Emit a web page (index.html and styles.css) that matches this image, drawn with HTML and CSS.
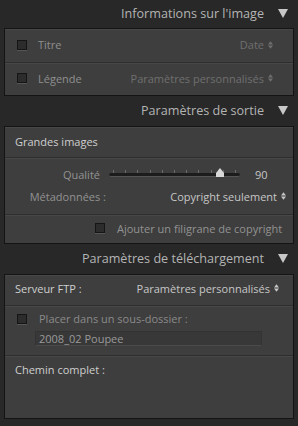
FILE: index.html
```html
<!DOCTYPE html>
<html lang="fr">
<head>
  <meta charset="UTF-8">
  <title>Panneaux d'exportation</title>
  <link rel="stylesheet" href="styles.css">
</head>
<body>
  <div class="panels">
    <div class="panel-header first">
      <span>Informations sur l'image</span>
      <span class="tri"></span>
    </div>
    <div class="box">
      <div class="row row-info">
        <span class="check"></span>
        <span class="label">Titre</span>
        <span class="select dim">Date <svg class="arrows" viewBox="0 0 6 9"><path d="M0 4L3 0L6 4Z M0 5L3 9L6 5Z"/></svg></span>
      </div>
      <div class="row row-info">
        <span class="check"></span>
        <span class="label">Légende</span>
        <span class="select dim">Paramètres personnalisés <svg class="arrows" viewBox="0 0 6 9"><path d="M0 4L3 0L6 4Z M0 5L3 9L6 5Z"/></svg></span>
      </div>
    </div>

    <div class="panel-header">
      <span>Paramètres de sortie</span>
      <span class="tri"></span>
    </div>
    <div class="box">
      <div class="row row-title">Grandes images</div>
      <div class="row row-output">
        <div class="line">
          <span class="field-label">Qualité</span>
          <div class="slider">
            <div class="ticks"></div>
            <div class="track"></div>
            <div class="thumb"></div>
          </div>
          <span class="value">90</span>
        </div>
        <div class="line">
          <span class="field-label">Métadonnées :</span>
          <span class="select bright">Copyright seulement <svg class="arrows" viewBox="0 0 6 9"><path d="M0 4L3 0L6 4Z M0 5L3 9L6 5Z"/></svg></span>
        </div>
      </div>
      <div class="row row-watermark">
        <span class="check"></span>
        <span class="label">Ajouter un filigrane de copyright</span>
      </div>
    </div>

    <div class="panel-header">
      <span>Paramètres de téléchargement</span>
      <span class="tri"></span>
    </div>
    <div class="box last">
      <div class="row row-title ftp">
        <span>Serveur FTP :</span>
        <span class="select bright">Paramètres personnalisés <svg class="arrows" viewBox="0 0 6 9"><path d="M0 4L3 0L6 4Z M0 5L3 9L6 5Z"/></svg></span>
      </div>
      <div class="row row-folder">
        <div class="line-check">
          <span class="check"></span>
          <span class="label">Placer dans un sous-dossier :</span>
        </div>
        <div class="text-field">2008_02 Poupee</div>
      </div>
      <div class="row row-path">Chemin complet :</div>
    </div>
  </div>
</body>
</html>
```

FILE: styles.css
```css
body {
  margin: 0;
  background-color: #282828;
  font-family: "Open Sans", "Noto Sans", Arial, sans-serif;
  color: #9a9a9a;
  width: 298px;
  height: 426px;
  overflow: hidden;
}

.panels {
  display: flex;
  flex-direction: column;
}

.panel-header {
  height: 30px;
  display: flex;
  align-items: center;
  justify-content: flex-end;
  gap: 14px;
  padding-right: 10px;
  padding-bottom: 2px;
  box-sizing: border-box;
  font-size: 12.6px;
  color: #b4b4b4;
}

.panel-header.first {
  height: 28px;
}

.tri {
  width: 0;
  height: 0;
  border-left: 5px solid transparent;
  border-right: 5px solid transparent;
  border-top: 9px solid #c8c8c8;
  margin-top: 1px;
}

.box {
  margin: 0 4px;
  background-color: #3e3e3e;
  border: 1px solid #141414;
}

.row {
  border-top: 1px solid #2e2e2e;
  box-shadow: inset 0 1px 0 #474747;
  font-size: 11px;
}

.row:first-child {
  border-top: none;
}

.check {
  width: 8px;
  height: 8px;
  background-color: #2c2c2c;
  border: 1px solid #151515;
  box-shadow: 0 1px 0 #555;
  flex-shrink: 0;
}

.row-info {
  height: 33px;
  display: flex;
  align-items: center;
  padding: 0 20px 2px 12px;
  box-sizing: border-box;
}

.row-info .label {
  margin-left: 11px;
  flex: 1;
  color: #8e8e8e;
}

.select {
  display: flex;
  align-items: center;
  gap: 4px;
}

.select.dim {
  color: #6f6f6f;
}

.select.bright {
  color: #c6c6c6;
}

.arrows {
  width: 5px;
  height: 8px;
  fill: currentColor;
}

.row-title {
  height: 30px;
  display: flex;
  align-items: center;
  padding-left: 10px;
  padding-bottom: 2px;
  box-sizing: border-box;
  color: #cfcfcf;
}

.row-output {
  height: 57px;
  display: flex;
  flex-direction: column;
  gap: 6px;
  padding: 8px 7px 0 4px;
  box-sizing: border-box;
}

.line {
  display: flex;
  align-items: center;
  height: 16px;
}

.field-label {
  width: 91px;
  text-align: right;
  color: #929292;
}

.line:last-child .field-label {
  width: 97px;
}

.line:last-child .select {
  margin-left: auto;
}

.slider {
  position: relative;
  width: 131px;
  height: 14px;
  margin-left: 9px;
}

.ticks {
  position: absolute;
  left: 4px;
  right: 4px;
  top: 3px;
  height: 3px;
  background: repeating-linear-gradient(to right, #6a6a6a 0, #6a6a6a 1px, transparent 1px, transparent 12.2px);
}

.track {
  position: absolute;
  left: 0;
  right: 0;
  top: 6px;
  height: 3px;
  border-radius: 2px;
  background-color: #1c1c1c;
  border-bottom: 1px solid #555;
}

.thumb {
  position: absolute;
  left: 107px;
  top: 1px;
  width: 8px;
  height: 9px;
  background-color: #d8d8d8;
  clip-path: polygon(50% 0, 100% 55%, 100% 100%, 0 100%, 0 55%);
}

.value {
  margin-left: 15px;
  color: #c6c6c6;
}

.row-watermark {
  height: 29px;
  display: flex;
  align-items: center;
  padding-left: 90px;
  padding-bottom: 2px;
  box-sizing: border-box;
  gap: 12px;
}

.row-watermark .label {
  color: #929292;
}

.ftp {
  justify-content: space-between;
  padding-right: 14px;
  padding-bottom: 4px;
}

.row-folder {
  height: 50px;
  padding: 5px 0 0 12px;
  box-sizing: border-box;
}

.line-check {
  display: flex;
  align-items: center;
  gap: 12px;
  color: #8a8a8a;
}

.text-field {
  margin: 5px 0 0 18px;
  width: 227px;
  height: 15px;
  background-color: #383838;
  border: 1px solid #333;
  border-bottom-color: #4a4a4a;
  padding-left: 3px;
  box-sizing: border-box;
  line-height: 13px;
  color: #9a9a9a;
}

.row-path {
  height: 63px;
  padding: 6px 0 0 10px;
  box-sizing: border-box;
  color: #cfcfcf;
}
```
